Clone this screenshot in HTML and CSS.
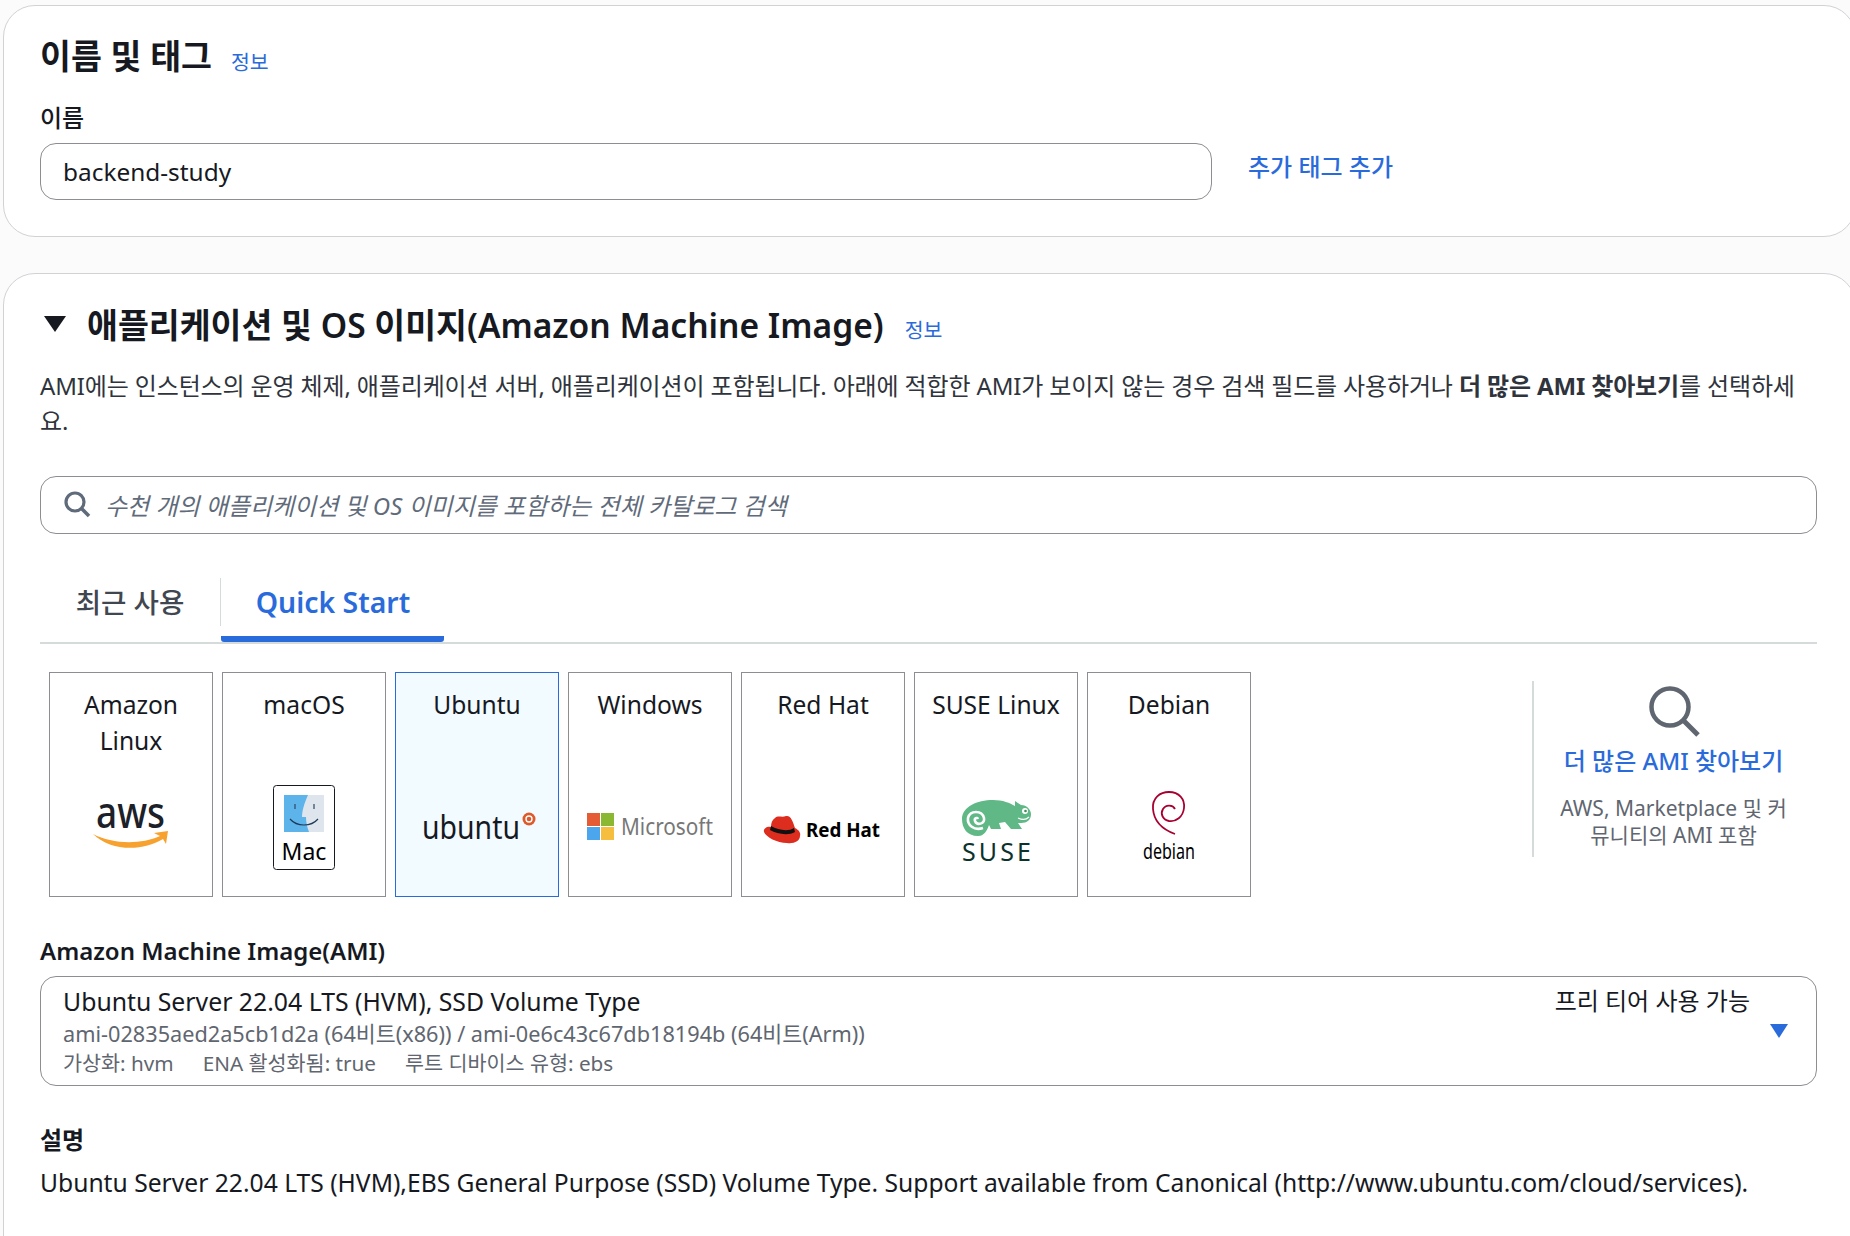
FILE: index.html
```html
<!DOCTYPE html>
<html lang="ko">
<head>
    <meta charset="UTF-8">
    <title>인스턴스 시작</title>
    <link rel="stylesheet" href="styles.css">
</head>
<body>
    <section class="panel panel-name">
        <div class="panel-title">
            <h2>이름 및 태그</h2>
            <a class="info">정보</a>
        </div>
        <div class="field-label">이름</div>
        <div class="name-row">
            <div class="text-box">backend-study</div>
            <a class="add-tag">추가 태그 추가</a>
        </div>
    </section>

    <section class="panel panel-ami">
        <div class="panel-title">
            <svg class="caret" viewBox="0 0 22 16"><path d="M0 0H22L11 16Z" fill="#16191f"/></svg>
            <h2>애플리케이션 및 OS 이미지(Amazon Machine Image)</h2>
            <a class="info">정보</a>
        </div>
        <p class="intro">AMI에는 인스턴스의 운영 체제, 애플리케이션 서버, 애플리케이션이 포함됩니다. 아래에 적합한 AMI가 보이지 않는 경우 검색 필드를 사용하거나 <b>더 많은 AMI 찾아보기</b>를 선택하세<br>요.</p>

        <div class="search-box">
            <svg class="search-icon" viewBox="0 0 28 28"><circle cx="12" cy="12" r="9" fill="none" stroke="#5f6b7a" stroke-width="3.2"/><path d="M18.5 18.5L26 26" stroke="#5f6b7a" stroke-width="3.6"/></svg>
            <span>수천 개의 애플리케이션 및 OS 이미지를 포함하는 전체 카탈로그 검색</span>
        </div>

        <div class="tabs">
            <div class="tab">최근 사용</div>
            <div class="tab tab-active">Quick Start</div>
        </div>

        <div class="os-row">
            <div class="tile">
                <div class="tile-name">Amazon Linux</div>
                <svg class="logo" viewBox="0 0 162 120">
                    <text class="logo-text logo-medium" x="46" y="52" font-size="44" textLength="69" lengthAdjust="spacingAndGlyphs" fill="#1b2029">aws</text>
                    <path d="M43 58C62 68 90 69 110 60L104 57L118 55L116 68L113 63C92 76 60 75 43 58Z" fill="#f7a12f"/>
                </svg>
            </div>
            <div class="tile">
                <div class="tile-name">macOS</div>
                <svg class="logo" viewBox="0 0 162 120">
                    <rect x="50.500" y="9.500" width="61" height="84" rx="3" fill="#fff" stroke="#16191f"/>
                    <rect x="61" y="19" width="40" height="37" fill="#dfe5ec"/>
                    <path d="M61 19H85C81 28 79 35 79 41H83C83 46 84 51 86 56H61Z" fill="#5cb4ea"/>
                    <path d="M72 28V33M91 28V33" stroke="#2d4a63" stroke-width="1.2"/>
                    <path d="M67 43C74 51 88 51 95 43" fill="none" stroke="#1f3a55" stroke-width="1.2"/>
                    <text class="logo-text" x="81" y="84" font-size="23" text-anchor="middle" fill="#000">Mac</text>
                </svg>
            </div>
            <div class="tile tile-selected">
                <div class="tile-name">Ubuntu</div>
                <svg class="logo" viewBox="0 0 162 120">
                    <text class="logo-text" x="26" y="63" font-size="32" textLength="98" lengthAdjust="spacingAndGlyphs" fill="#16191f">ubuntu</text>
                    <circle cx="133" cy="43" r="6.500" fill="#dd5a2b"/>
                    <circle cx="133" cy="43" r="3" fill="none" stroke="#fff" stroke-width="1.400"/>
                </svg>
            </div>
            <div class="tile">
                <div class="tile-name">Windows</div>
                <svg class="logo" viewBox="0 0 162 120">
                    <rect x="18" y="37" width="13" height="13" fill="#e55c34"/>
                    <rect x="32" y="37" width="13" height="13" fill="#8ab833"/>
                    <rect x="18" y="51" width="13" height="13" fill="#4ba6ee"/>
                    <rect x="32" y="51" width="13" height="13" fill="#f6be3e"/>
                    <text class="logo-text" x="52" y="59" font-size="24" textLength="92" lengthAdjust="spacingAndGlyphs" fill="#777">Microsoft</text>
                </svg>
            </div>
            <div class="tile">
                <div class="tile-name">Red Hat</div>
                <svg class="logo" viewBox="0 0 162 120">
                    <path d="M33 42C36 39 40 42 44 40C49 39 51 46 53 52C57 54 59 57 58 60C58 65 52 68 45 67C35 67 24 61 22 56C21 52 26 50 29 51C29 47 30 44 33 42Z" fill="#dc2d1f"/>
                    <path d="M29 50C36 54 46 56 52 52L53 56C46 60 35 58 28 54Z" fill="#111"/>
                    <text class="logo-text logo-bold" x="64" y="61" font-size="20" textLength="74" lengthAdjust="spacingAndGlyphs" fill="#000">Red Hat</text>
                </svg>
            </div>
            <div class="tile">
                <div class="tile-name">SUSE Linux</div>
                <svg class="logo" viewBox="0 0 162 120">
                    <path d="M63 60C52 60 47 52 47 43C47 31 62 24 78 24C88 24 95 27 100 30L100 25L106 29C112 29 116 34 116 38C116 44 112 47 106 47L103 47L107 53L96 53L90 46L84 47L86 53L76 53L74 49C72 55 69 60 63 60Z" fill="#5fb885"/>
                    <path d="M68 52C59 55 52 49 53 42C55 34 67 34 69 42C70 48 62 50 60 45C59 42 62 41 63 43" fill="none" stroke="#fff" stroke-width="2.600"/>
                    <circle cx="110" cy="35" r="3" fill="#fff"/>
                    <circle cx="110.500" cy="35" r="1.300" fill="#3d8a5f"/>
                    <path d="M103 42C107 44 111 44 114 41" fill="none" stroke="#fff" stroke-width="1.200"/>
                    <text class="logo-text" x="47" y="85" font-size="25" textLength="69" fill="#0c322c">SUSE</text>
                </svg>
            </div>
            <div class="tile">
                <div class="tile-name">Debian</div>
                <svg class="logo" viewBox="0 0 162 120">
                    <path d="M87 58C76 54 66 46 65 33C64 22 72 16 81 16C91 16 97 23 96 32C95 41 88 46 81 45C75 44 72 38 75 33C78 28 85 29 87 33" fill="none" stroke="#a80030" stroke-width="1.800"/>
                    <text class="logo-text" x="55" y="83" font-size="22" textLength="52" lengthAdjust="spacingAndGlyphs" fill="#000">debian</text>
                </svg>
            </div>
            <div class="more-ami">
                <svg class="more-icon" viewBox="0 0 56 56"><circle cx="24" cy="24" r="18.500" fill="none" stroke="#5f6670" stroke-width="4.500"/><path d="M37 37L52 52" stroke="#5f6670" stroke-width="5"/></svg>
                <a class="more-link">더 많은 AMI 찾아보기</a>
                <div class="more-note">AWS, Marketplace 및 커뮤니티의 AMI 포함</div>
            </div>
        </div>

        <div class="field-label ami-label">Amazon Machine Image(AMI)</div>
        <div class="ami-select">
            <div class="ami-info">
                <div class="ami-name">Ubuntu Server 22.04 LTS (HVM), SSD Volume Type</div>
                <div class="ami-sub">ami-02835aed2a5cb1d2a (64비트(x86)) / ami-0e6c43c67db18194b (64비트(Arm))</div>
                <div class="ami-props">
                    <span>가상화: hvm</span>
                    <span>ENA 활성화됨: true</span>
                    <span>루트 디바이스 유형: ebs</span>
                </div>
            </div>
            <div class="ami-side">
                <div class="free-tier">프리 티어 사용 가능</div>
                <svg class="ami-caret" viewBox="0 0 18 14"><path d="M0 0H18L9 14Z" fill="#2a6bdc"/></svg>
            </div>
        </div>

        <div class="field-label desc-label">설명</div>
        <p class="desc">Ubuntu Server 22.04 LTS (HVM),EBS General Purpose (SSD) Volume Type. Support available from Canonical (http://www.ubuntu.com/cloud/services).</p>
    </section>
</body>
</html>
```

FILE: styles.css
```css
html, body {
    height: 1236px;
    overflow: hidden;
}
body {
    margin: 0;
    background-color: #fbfbfb;
    font-family: "Noto Sans", "Noto Sans CJK KR", sans-serif;
    font-size: 24px;
    color: #16191f;
    padding: 5px 0 0 3px;
    box-sizing: border-box;
}
a {
    color: #2a6bdc;
}
.panel {
    width: 1853px;
    box-sizing: border-box;
    background-color: white;
    border: 1px solid #d0d2d6;
    border-radius: 32px;
    padding: 0 36px;
}
.panel-name {
    height: 232px;
    margin-bottom: 36px;
    padding-top: 26px;
}
.panel-ami {
    height: 1000px;
    padding-top: 28px;
}
.panel-title {
    display: flex;
    align-items: center;
    height: 44px;
}
.panel-title h2 {
    margin: 0;
    font-size: 33.600px;
    font-weight: 600;
}
.panel-ami h2 {
    padding-bottom: 2px;
}
.info {
    font-size: 20.500px;
    margin-left: 21px;
    margin-top: 10px;
}
.panel-name .info {
    margin-left: 19px;
    margin-top: 14px;
}
.caret {
    width: 22px;
    height: 16px;
    margin: 0 21px 0 4px;
}
.field-label {
    font-size: 24px;
    font-weight: 600;
    line-height: 32px;
}
.panel-name .field-label {
    margin-top: 26px;
    margin-bottom: 9px;
    font-weight: 500;
}
.name-row {
    display: flex;
    align-items: center;
}
.text-box {
    width: 1172px;
    height: 57px;
    box-sizing: border-box;
    border: 1px solid #8d8d93;
    border-radius: 16px;
    padding: 0 22px;
    font-size: 24.400px;
    line-height: 55px;
}
.add-tag {
    font-size: 24px;
    font-weight: 500;
    margin-left: 36px;
    margin-top: -12px;
}
.intro {
    width: 1777px;
    margin: 22px 0 0;
    line-height: 35px;
    letter-spacing: -0.14px;
    color: #2f343c;
}
.intro b {
    font-weight: 700;
}
.search-box {
    width: 1777px;
    height: 58px;
    box-sizing: border-box;
    margin-top: 38px;
    border: 1px solid #8d8d93;
    border-radius: 16px;
    padding: 0 22px 2px;
    display: flex;
    align-items: center;
    gap: 14px;
    font-style: italic;
    color: #5f6b7a;
}
.search-icon {
    width: 28px;
    height: 28px;
}
.tabs {
    width: 1777px;
    height: 110px;
    box-sizing: border-box;
    border-bottom: 2px solid #d5dbdb;
    padding-top: 44px;
    display: flex;
    align-items: flex-start;
}
.tab {
    width: 180px;
    height: 48px;
    line-height: 48px;
    text-align: center;
    font-size: 27.600px;
    font-weight: 500;
    color: #414750;
    border-right: 1px solid #d5dbdb;
}
.tab-active {
    width: 222px;
    height: 58px;
    padding-left: 1px;
    color: #2a6bdc;
    font-size: 28.400px;
    font-weight: 600;
    border-right: none;
    border-bottom: 6px solid #2a6bdc;
    border-radius: 0 0 3px 3px;
}
.os-row {
    display: flex;
    gap: 9px;
    margin-top: 28px;
    padding-left: 9px;
    width: 1768px;
}
.tile {
    width: 164px;
    height: 225px;
    box-sizing: border-box;
    border: 1px solid #8d8d93;
    display: flex;
    flex-direction: column;
    align-items: center;
    text-align: center;
}
.tile-selected {
    background-color: #f2fbff;
    border-color: #2a6bdc;
}
.tile-name {
    margin-top: 14px;
    font-size: 24.600px;
    line-height: 36px;
    padding: 0 4px;
}
.logo {
    width: 162px;
    height: 120px;
    margin-top: auto;
    display: block;
}
.logo-text {
    font-family: "Noto Sans", sans-serif;
}
.logo-medium {
    font-weight: 500;
}
.logo-bold {
    font-weight: 700;
}
.more-ami {
    width: 279px;
    height: 176px;
    margin: 9px 0 0 auto;
    border-left: 2px solid #d5dbdb;
    padding: 0 4px 0 0;
    display: flex;
    flex-direction: column;
    align-items: center;
    text-align: center;
}
.more-icon {
    width: 56px;
    height: 56px;
    margin-top: 2px;
}
.more-link {
    margin-top: 4px;
    font-weight: 500;
    line-height: 36px;
}
.more-note {
    width: 232px;
    margin-top: 16px;
    font-size: 21px;
    line-height: 27px;
    color: #5f6670;
}
.ami-label {
    margin-top: 38px;
}
.ami-select {
    width: 1777px;
    height: 110px;
    box-sizing: border-box;
    margin-top: 9px;
    border: 1px solid #8d8d93;
    border-radius: 16px;
    padding: 7px 22px;
    display: flex;
    justify-content: space-between;
}
.ami-name {
    font-size: 24.800px;
    line-height: 35px;
}
.ami-sub {
    font-size: 21.700px;
    line-height: 30px;
    color: #5f6670;
}
.ami-props {
    display: flex;
    gap: 29px;
    font-size: 20.700px;
    line-height: 28px;
    color: #5f6670;
}
.ami-side {
    width: 260px;
    display: flex;
    flex-direction: column;
    align-items: flex-end;
}
.free-tier {
    line-height: 33px;
    margin-right: 44px;
    white-space: nowrap;
}
.ami-caret {
    width: 18px;
    height: 14px;
    margin: 7px 6px 0 0;
}
.desc-label {
    margin-top: 38px;
}
.desc {
    margin: 9px 0 0;
    font-size: 24.650px;
    line-height: 35px;
    white-space: nowrap;
}
```
